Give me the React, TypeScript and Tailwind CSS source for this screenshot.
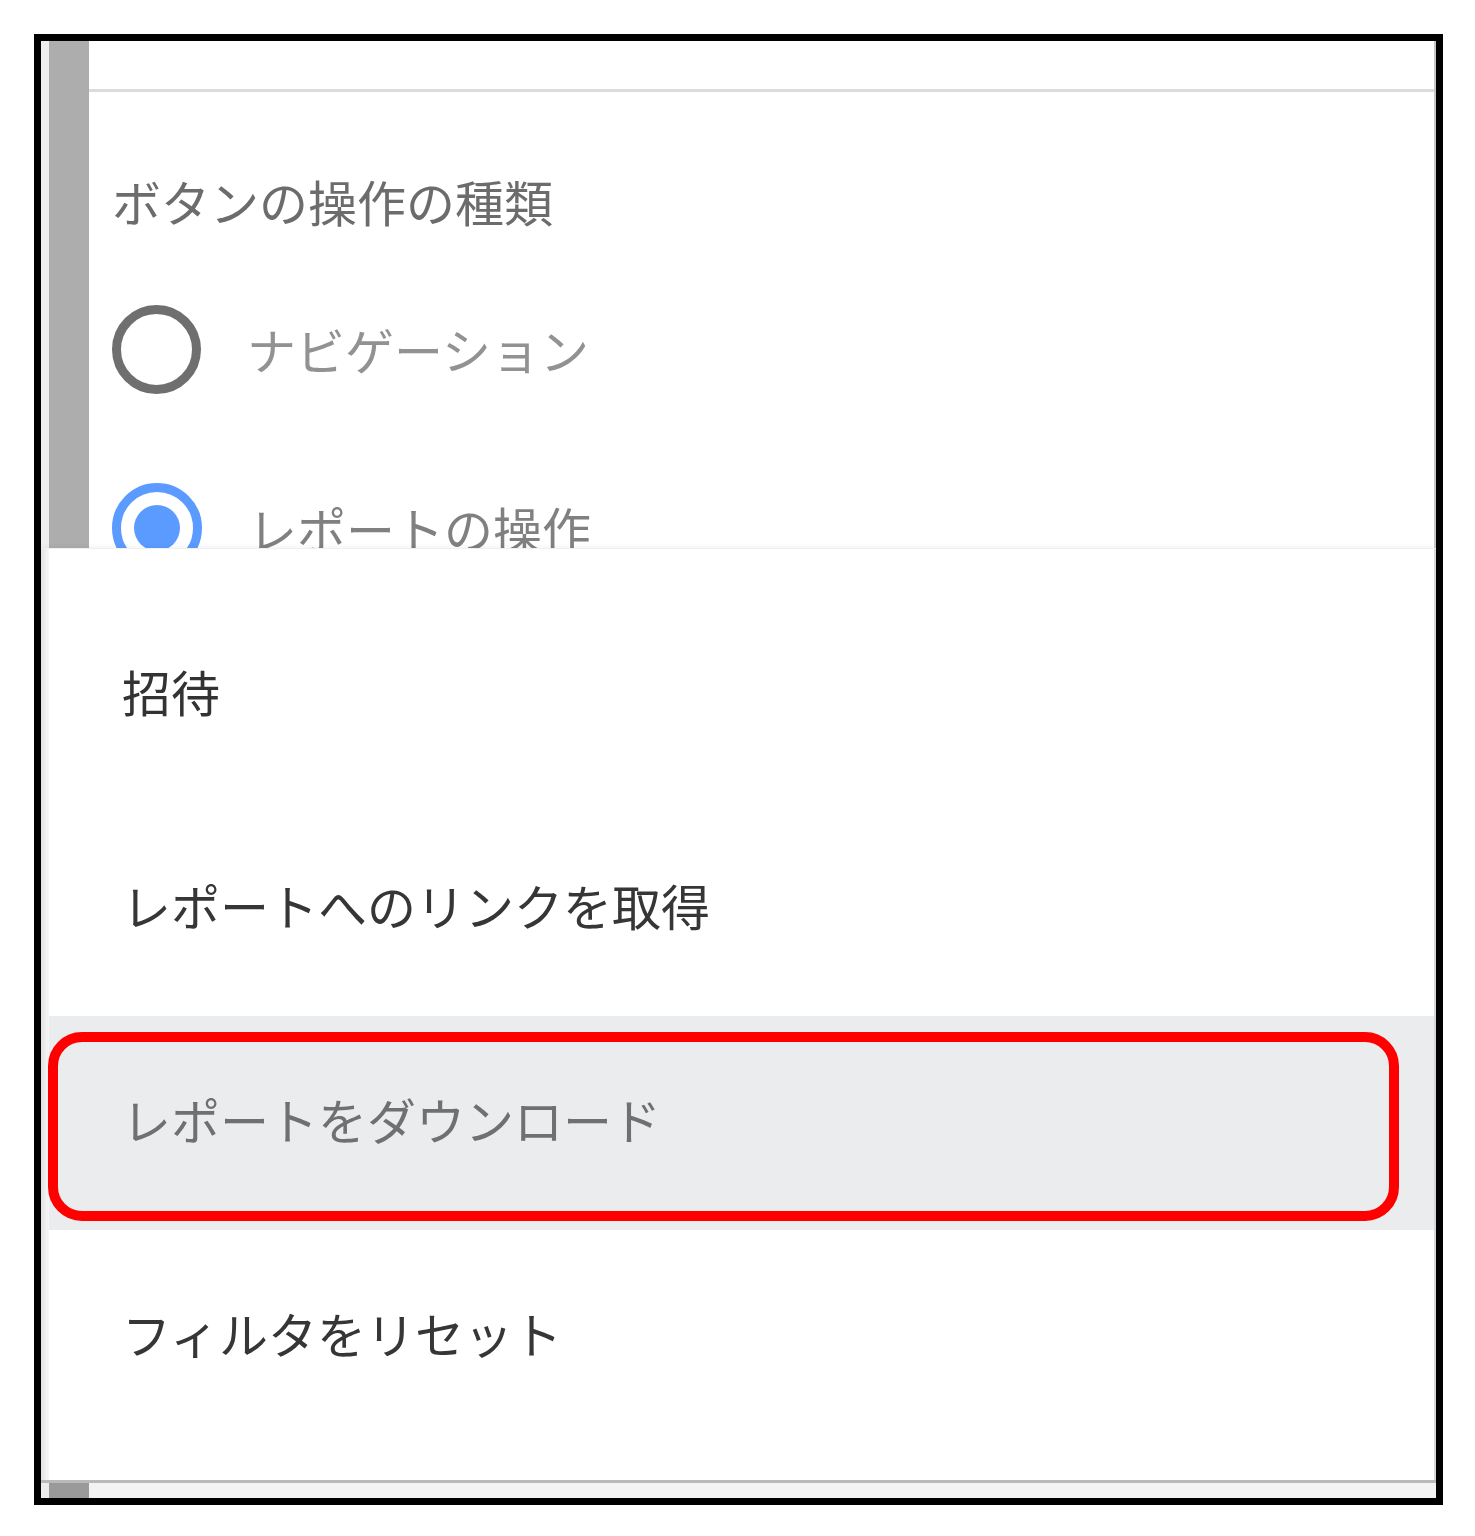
import React from "react";

const font = { fontFamily: '"Noto Sans CJK JP", "Noto Sans", sans-serif' };

function Radio({ checked }: { checked?: boolean }) {
  if (checked) {
    return (
      <div className="flex h-[90px] w-[90px] shrink-0 items-center justify-center rounded-full border-[9px] border-[#5b9bff]">
        <div className="h-[46px] w-[46px] rounded-full bg-[#5b9bff]" />
      </div>
    );
  }
  return <div className="h-[89px] w-[89px] shrink-0 rounded-full border-[9px] border-[#6f6f6f]" />;
}

const items = [
  { label: "招待", color: "text-[#333333]" },
  { label: "レポートへのリンクを取得", color: "text-[#363636]" },
  { label: "レポートをダウンロード", color: "text-[#707070]", active: true },
  { label: "フィルタをリセット", color: "text-[#363636]" },
];

export default function App() {
  return (
    <div className="h-[1536px] w-[1475px] bg-white pl-[34px] pt-[34px]" style={font}>
      <div className="flex h-[1471px] w-[1409px] flex-col border-[7px] border-black bg-white">
        {/* underlying panel */}
        <div className="flex h-[507px] shrink-0 overflow-hidden border-r-2 border-[#c3c6ca]">
          <div className="w-2 shrink-0 bg-[#eeeeee]" />
          <div className="w-10 shrink-0 bg-[#adadad]" />
          <div className="flex flex-1 flex-col">
            <div className="h-[48px] shrink-0" />
            <div className="h-[3px] shrink-0 bg-[#dcdcdc]" />
            <div className="flex flex-col pl-[23px] pt-[79px]">
              <div className="h-[60px] text-[49px] leading-[60px] text-[#6c6c6c]">ボタンの操作の種類</div>
              <div className="mt-[73px] flex h-[90px] items-center gap-[46px]">
                <Radio />
                <span className="text-[49px] leading-[60px] text-[#929292]">ナビゲーション</span>
              </div>
              <div className="mt-[89px] flex h-[90px] items-center gap-[46px]">
                <Radio checked />
                <span className="text-[49px] leading-[60px] text-[#808080]">レポートの操作</span>
              </div>
            </div>
          </div>
        </div>

        {/* menu popup */}
        <div className="flex h-[932px] shrink-0 border-t border-[#efefef] shadow-[0_-2px_4px_rgba(0,0,0,0.04)]">
          <div className="w-2 shrink-0 bg-gradient-to-r from-[#e2e2e2] to-[#f7f7f7]" />
          <div className="flex flex-1 flex-col border-r-2 border-[#d4d7da] pt-[39px]">
            {items.map((it) => (
              <div
                key={it.label}
                className={`relative flex h-[214px] shrink-0 items-center pb-[8px] pl-[73px] ${it.active ? "bg-[#ebecee]" : ""}`}
              >
                <span className={`text-[49px] leading-[60px] ${it.color}`}>{it.label}</span>
                {it.active && (
                  <div className="absolute left-[-1px] top-[16px] h-[189px] w-[1351px] rounded-[34px] border-[10px] border-[#ff0000]" />
                )}
              </div>
            ))}
          </div>
        </div>

        {/* bottom scrollbar */}
        <div className="flex h-[18px] shrink-0 border-t-[3px] border-[#b9b9b9] bg-[#f3f3f3]">
          <div className="w-2 shrink-0 bg-[#ececec]" />
          <div className="w-10 shrink-0 bg-[#9a9a9a]" />
        </div>
      </div>
    </div>
  );
}
